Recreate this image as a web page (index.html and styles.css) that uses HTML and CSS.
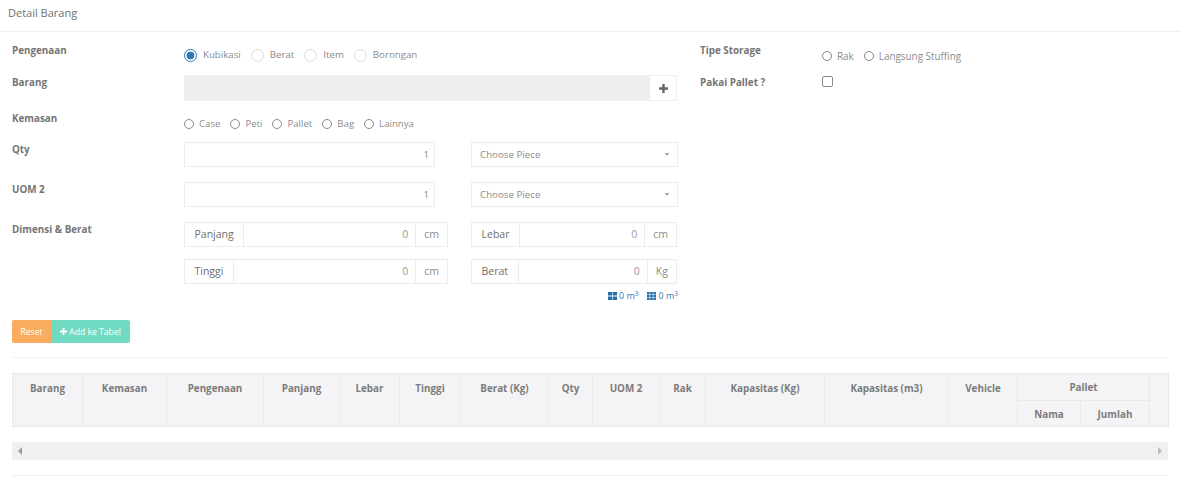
FILE: index.html
```html
<!DOCTYPE html>
<html lang="id">
<head>
<meta charset="utf-8">
<title>Detail Barang</title>
<link rel="stylesheet" href="styles.css">
</head>
<body>
<div class="head">Detail Barang</div>
<div class="form">
  <div class="col-left">
    <div class="row row-a">
      <div class="label">Pengenaan</div>
      <div class="radios big">
        <label class="opt"><input class="radio on" type="radio" name="p" checked>Kubikasi</label>
        <label class="opt"><input class="radio" type="radio" name="p">Berat</label>
        <label class="opt"><input class="radio" type="radio" name="p">Item</label>
        <label class="opt"><input class="radio" type="radio" name="p">Borongan</label>
      </div>
    </div>
    <div class="row row-b">
      <div class="label">Barang</div>
      <div class="control barang">
        <div class="barang-fill"></div>
        <div class="plus"><svg width="9" height="9" viewBox="0 0 9 9"><path d="M3.3 0h2.4v3.3H9v2.4H5.7V9H3.3V5.7H0V3.3h3.3z" fill="#666"/></svg></div>
      </div>
    </div>
    <div class="row row-c">
      <div class="label">Kemasan</div>
      <div class="radios small tight">
        <label class="opt"><input class="radio" type="radio" name="k">Case</label>
        <label class="opt"><input class="radio" type="radio" name="k">Peti</label>
        <label class="opt"><input class="radio" type="radio" name="k">Pallet</label>
        <label class="opt"><input class="radio" type="radio" name="k">Bag</label>
        <label class="opt"><input class="radio" type="radio" name="k">Lainnya</label>
      </div>
    </div>
    <div class="row row-d">
      <div class="label">Qty</div>
      <div class="control split">
        <div class="box num qty">1</div>
        <div class="box select">Choose Piece<span class="caret"></span></div>
      </div>
    </div>
    <div class="row row-d">
      <div class="label">UOM 2</div>
      <div class="control split">
        <div class="box num qty">1</div>
        <div class="box select">Choose Piece<span class="caret"></span></div>
      </div>
    </div>
    <div class="row row-e">
      <div class="label">Dimensi &amp; Berat</div>
      <div class="control dims">
        <div class="group g1"><span class="addon">Panjang</span><span class="val">0</span><span class="addon">cm</span></div>
        <div class="group g2"><span class="addon">Lebar</span><span class="val">0</span><span class="addon">cm</span></div>
        <div class="group g1"><span class="addon">Tinggi</span><span class="val">0</span><span class="addon">cm</span></div>
        <div class="group g2"><span class="addon">Berat</span><span class="val">0</span><span class="addon">Kg</span></div>
      </div>
    </div>
    <div class="volume">
      <svg width="9" height="8" viewBox="0 0 9 8"><path d="M0 0h4.2v3.6H0zM4.8 0H9v3.6H4.8zM0 4.4h4.2V8H0zM4.8 4.4H9V8H4.8z" fill="#1f6fad"/></svg>
      <span class="vol-text">0 m<sup>3</sup></span>
      <svg class="vol-second" width="9" height="8" viewBox="0 0 9 8"><path d="M0 0h2.6v2.3H0zM3.2 0h2.6v2.3H3.2zM6.4 0H9v2.3H6.4zM0 2.85h2.6v2.3H0zM3.2 2.85h2.6v2.3H3.2zM6.4 2.85H9v2.3H6.4zM0 5.7h2.6V8H0zM3.2 5.7h2.6V8H3.2zM6.4 5.7H9V8H6.4z" fill="#1f6fad"/></svg>
      <span class="vol-text">0 m<sup>3</sup></span>
    </div>
  </div>
  <div class="col-right">
    <div class="row row-a">
      <div class="label label-r">Tipe Storage</div>
      <div class="radios small">
        <label class="opt"><input class="radio" type="radio" name="t">Rak</label>
        <label class="opt"><input class="radio" type="radio" name="t">Langsung Stuffing</label>
      </div>
    </div>
    <div class="row">
      <div class="label label-r">Pakai Pallet ?</div>
      <input class="check" type="checkbox">
    </div>
  </div>
</div>
<div class="actions">
  <button class="btn reset" type="button">Reset</button><button class="btn add" type="button"><svg width="7" height="7" viewBox="0 0 9 9"><path d="M3.3 0h2.4v3.3H9v2.4H5.7V9H3.3V5.7H0V3.3h3.3z" fill="#fff"/></svg> Add ke Tabel</button>
</div>
<hr class="rule rule-1">
<table class="grid">
  <colgroup>
    <col class="c70"><col class="c84"><col class="c97"><col class="c76"><col class="c60"><col class="c61"><col class="c88"><col class="c44"><col class="c67"><col class="c46"><col class="c119"><col class="c124"><col class="c69"><col class="c63"><col class="c69"><col class="c19">
  </colgroup>
  <thead>
    <tr>
      <th rowspan="2">Barang</th><th rowspan="2">Kemasan</th><th rowspan="2">Pengenaan</th><th rowspan="2">Panjang</th><th rowspan="2">Lebar</th><th rowspan="2">Tinggi</th><th rowspan="2">Berat (Kg)</th><th rowspan="2">Qty</th><th rowspan="2">UOM 2</th><th rowspan="2">Rak</th><th rowspan="2">Kapasitas (Kg)</th><th rowspan="2">Kapasitas (m3)</th><th rowspan="2">Vehicle</th><th colspan="2">Pallet</th><th rowspan="2"></th>
    </tr>
    <tr class="sub"><th>Nama</th><th>Jumlah</th></tr>
  </thead>
</table>
<div class="scrollbar"><span class="arrow-l"></span><span class="arrow-r"></span></div>
<hr class="rule rule-2">
</body>
</html>
```
FILE: styles.css
```css
* { box-sizing: border-box; }
html, body { margin: 0; padding: 0; }
body {
  width: 1181px;
  height: 482px;
  overflow: hidden;
  background: #fff;
  color: #777;
  font-family: "Open Sans", "Liberation Sans", sans-serif;
  font-size: 10px;
}
.head {
  height: 32px;
  padding: 5px 8px 0;
  border-bottom: 1px solid #f0f0f0;
  font-size: 11px;
  line-height: 16px;
  color: #707070;
}
.form { display: flex; padding: 11px 0 0 12px; }
.col-left { width: 665px; }
.col-right { margin-left: 23px; }
.row { display: flex; align-items: flex-start; }
.row-a { height: 32px; }
.row-b { height: 36px; }
.row-c { height: 31px; }
.row-d { height: 40px; }
.label {
  width: 172px;
  flex: none;
  font-weight: 700;
  font-size: 9.85px;
  line-height: 14px;
  color: #757575;
}
.label-r { width: 122px; }
.control { width: 494px; }
.radios { display: flex; align-items: center; font-size: 9.9px; color: #8c8c8c; }
.opt { display: flex; align-items: center; }
.radio {
  appearance: none;
  margin: 0;
  flex: none;
  border-radius: 50%;
  background: #fff;
}
.radios.big { gap: 10px; padding-top: 5px; font-size: 9.7px; }
.radios.big .opt { gap: 6px; line-height: 14px; }
.radios.big .radio { width: 13px; height: 13px; border: 1px solid #dcdcdc; }
.radios.big .radio.on { border-color: #2f77b5; background: radial-gradient(circle, #2f77b5 0 3.6px, #fff 4.2px); }
.radios.small { gap: 10px; padding-top: 6px; }
.radios.tight { font-size: 9.65px; }
.radios.small .opt { gap: 5px; line-height: 14px; }
.radios.small .radio { width: 10px; height: 10px; border: 1px solid #8a8a8a; }
.barang { display: flex; width: 493px; height: 26px; border: 1px solid #eee; }
.barang-fill { flex: 1; background: #eee; }
.plus { width: 26px; display: flex; align-items: center; justify-content: center; }
.split { display: flex; gap: 36px; }
.box {
  height: 25px;
  border: 1px solid #ececec;
  font-size: 9.75px;
  line-height: 23px;
  color: #8c8c8c;
}
.num { text-align: right; padding-right: 5px; }
.qty { width: 251px; }
.select { position: relative; width: 207px; padding-left: 8px; }
.caret {
  position: absolute;
  right: 8px;
  top: 10px;
  border: 2.5px solid transparent;
  border-top: 3.5px solid #999;
  border-bottom: 0;
}
.dims { display: grid; grid-template-columns: 264px 206px; column-gap: 23px; row-gap: 12px; }
.group { display: flex; height: 25px; border: 1px solid #ececec; font-size: 10.5px; line-height: 23px; color: #6f6f6f; }
.addon { flex: none; padding: 0 9.5px; }
.addon:first-child { border-right: 1px solid #ececec; }
.addon:last-child { border-left: 1px solid #ececec; padding: 0 8px; color: #8c8c8c; }
.val { flex: 1; text-align: right; padding-right: 7px; color: #999; }
.volume {
  display: flex;
  justify-content: flex-end;
  align-items: center;
  margin-right: -1px;
  height: 14px;
  margin-top: 5px;
  font-size: 9px;
  color: #2f7ab5;
  line-height: 14px;
  gap: 2px;
}
.vol-second { margin-left: 7px; }
.volume sup { font-size: 6.5px; line-height: 0; vertical-align: 3px; }
.check {
  appearance: none;
  margin: 1px 0 0;
  width: 11px;
  height: 11px;
  border: 1px solid #8a8a8a;
  border-radius: 2px;
}
.actions { display: flex; margin: 17px 0 0 12px; }
.btn {
  height: 23px;
  border: 0;
  padding: 0;
  color: #fff;
  font-family: inherit;
  font-size: 8.6px;
}
.reset { width: 39px; background: #f9ac5e; border-radius: 2px 0 0 2px; }
.add { width: 79px; background: #70dac3; border-radius: 0 2px 2px 0; }
.rule { height: 1px; border: 0; margin: 0 13px 0 12px; background: #f1f1f1; }
.rule-1 { margin-top: 14px; }
.grid {
  table-layout: fixed;
  width: 1156px;
  margin: 15px 0 0 12px;
  border-collapse: collapse;
  background: #f4f4f6;
  font-size: 9.85px;
  color: #7c7c7c;
}
.grid th {
  border: 1px solid #e9e9eb;
  padding: 0;
  height: 27px;
  font-weight: 700;
  vertical-align: middle;
  line-height: 14px;
}
.grid .sub th { height: 26px; }
.grid th[rowspan] { vertical-align: top; padding-top: 7px; }
.c70 { width: 70px; } .c84 { width: 84px; } .c97 { width: 97px; } .c76 { width: 76px; }
.c60 { width: 60px; } .c61 { width: 61px; } .c88 { width: 88px; } .c44 { width: 44px; }
.c67 { width: 67px; } .c46 { width: 46px; } .c119 { width: 119px; } .c124 { width: 124px; }
.c69 { width: 69px; } .c63 { width: 63px; } .c19 { width: 19px; }
.scrollbar {
  display: flex;
  justify-content: space-between;
  align-items: center;
  height: 18px;
  margin: 15px 13px 0 12px;
  padding: 0 6px;
  background: #f0f0f0;
}
.arrow-l { border: 4px solid transparent; border-right: 4px solid #999; border-left: 0; }
.arrow-r { border: 4px solid transparent; border-left: 4px solid #bbb; border-right: 0; }
.rule-2 { margin-top: 15px; }
```
